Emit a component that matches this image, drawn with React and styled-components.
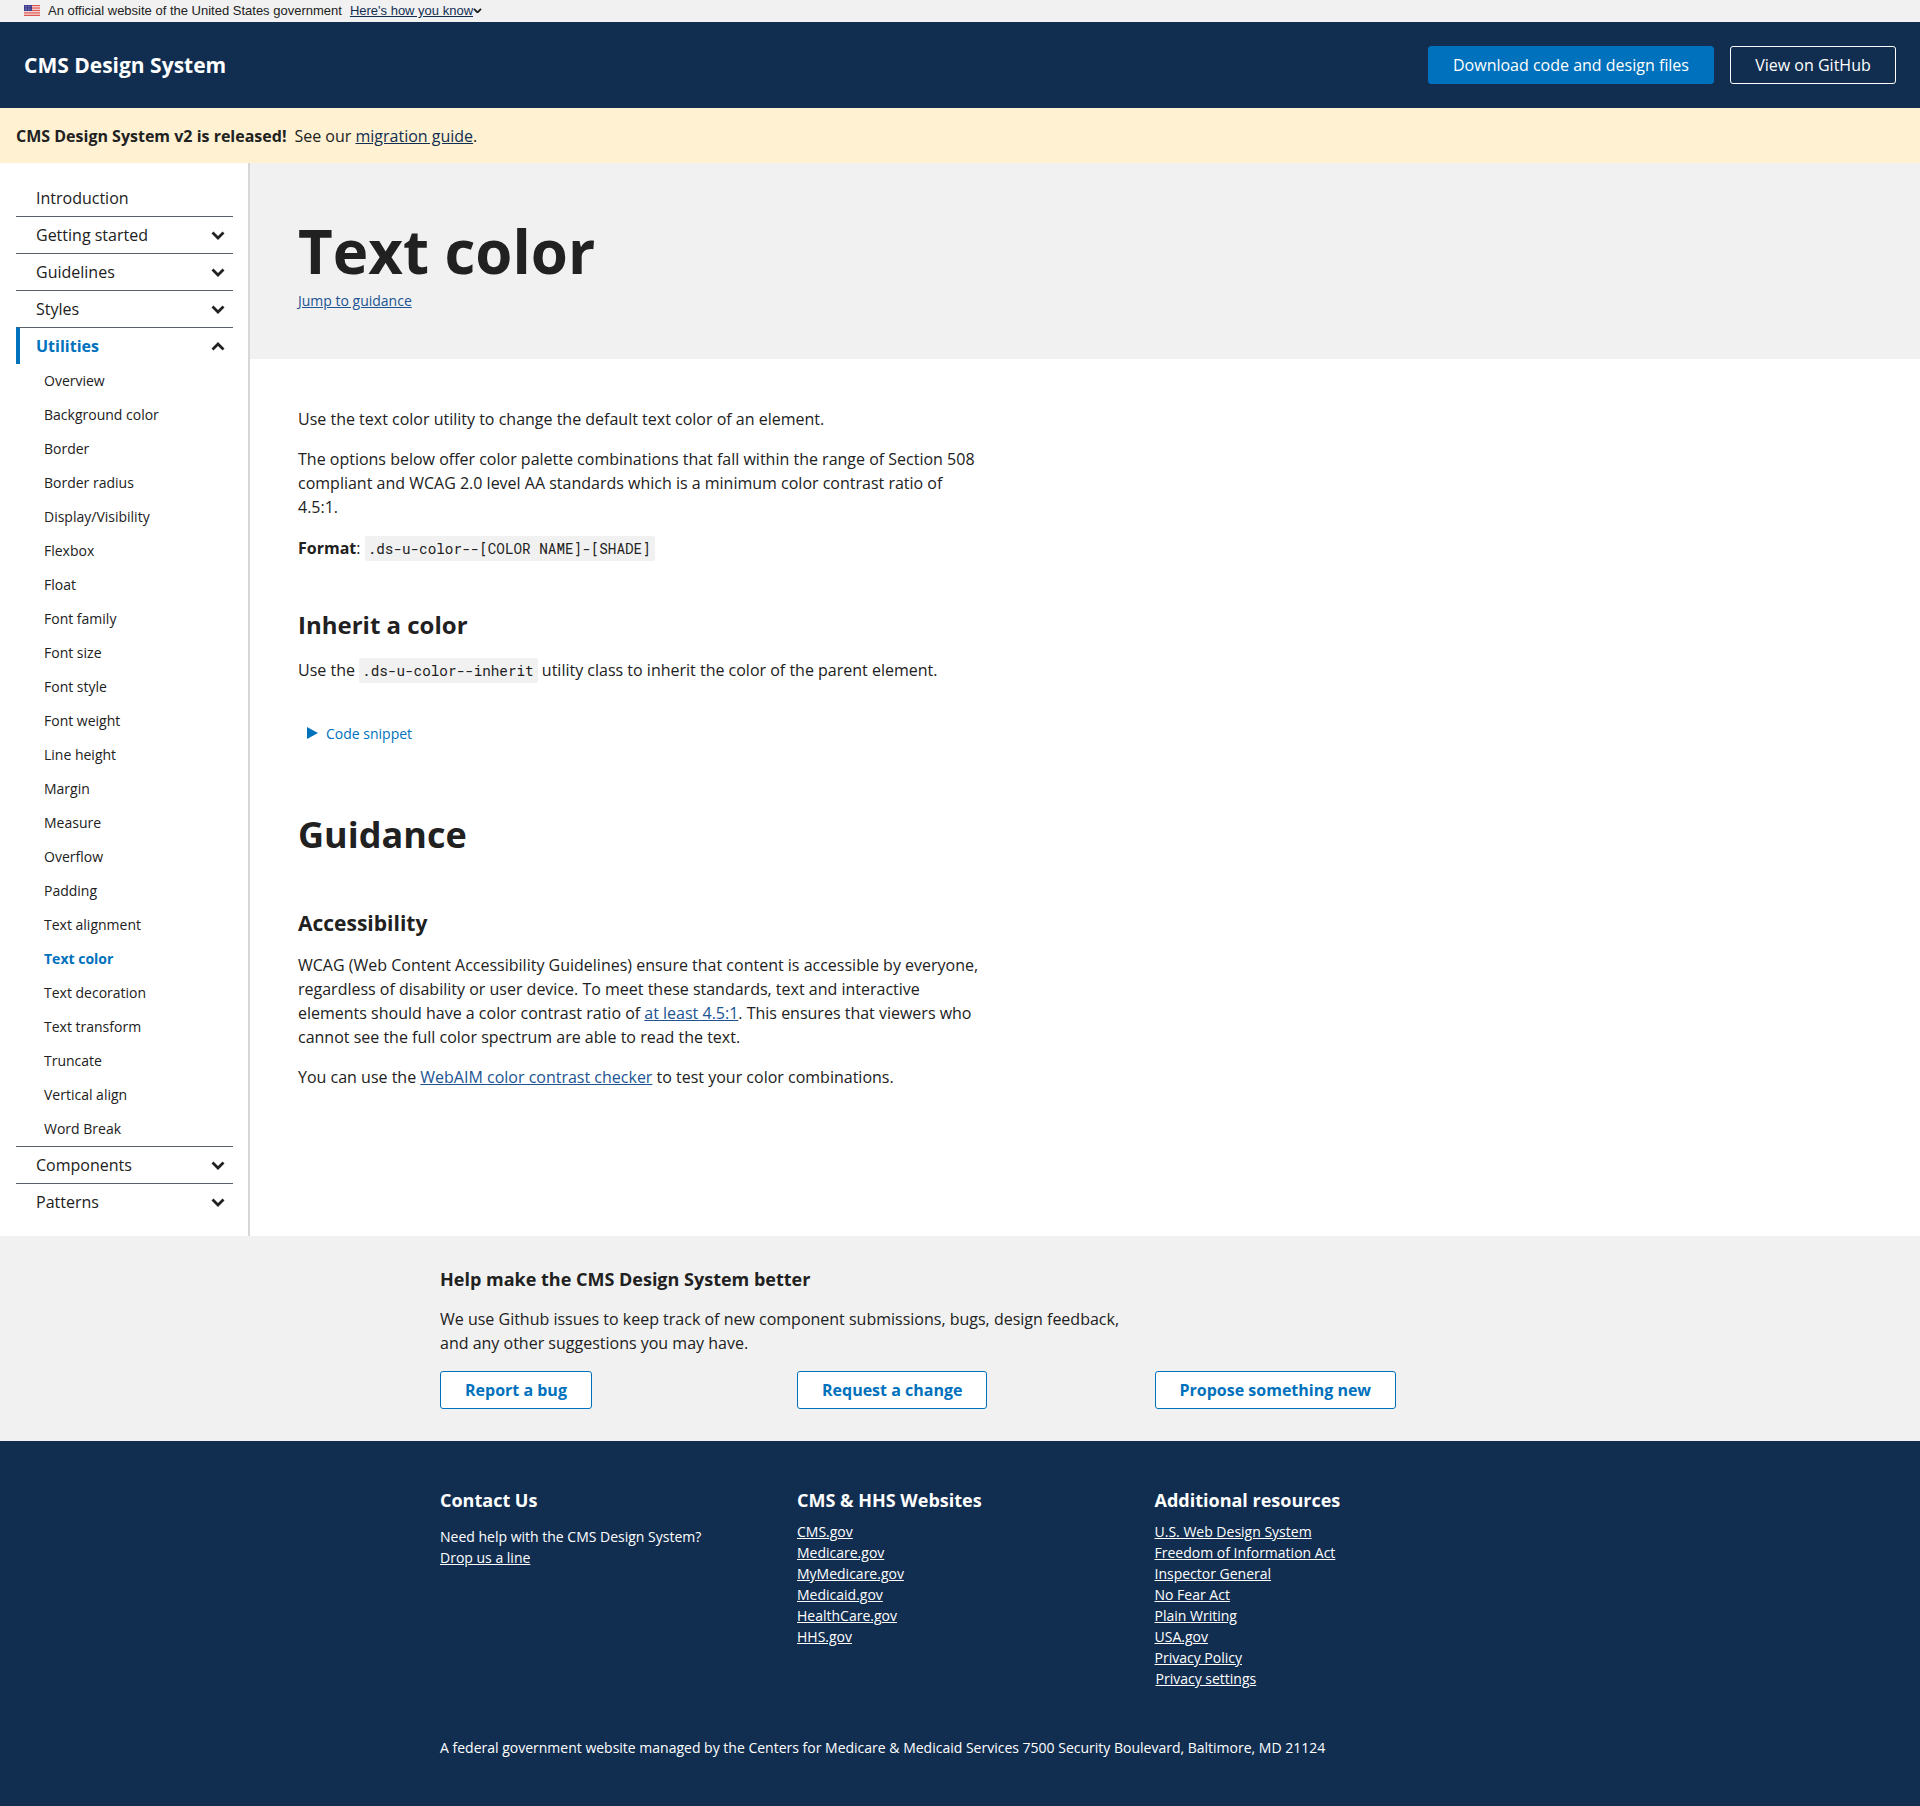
import React from 'react'
import styled, { createGlobalStyle } from 'styled-components'

const GlobalStyle = createGlobalStyle`
  body {
    margin: 0;
    font-family: "Open Sans", "Liberation Sans", sans-serif;
    color: #212121;
    background: #fff;
  }
  * { box-sizing: border-box; }
`

const GovBanner = styled.div`
  height: 22px;
  background: #f1f1f1;
  padding: 0 0 1px 24px;
  display: flex;
  align-items: center;
  font-family: "Liberation Sans", Arial, sans-serif;
  font-size: 13px;
  svg.flag { margin-right: 8px; }
  a {
    color: #112e51;
    margin-left: 8px;
    text-decoration: underline;
  }
`

const ChevronSvg = styled.svg`
  flex: none;
  transform: ${p => (p.$up ? 'rotate(180deg)' : 'none')};
`

const Chevron = ({ up, size = 14 }) => (
  <ChevronSvg $up={up} width={size} height={size * 9 / 14} viewBox="0 0 14 9">
    <path d="M1.5 1.5 L7 7 L12.5 1.5" fill="none" stroke="#212121" strokeWidth="2.8" />
  </ChevronSvg>
)

const Header = styled.header`
  height: 86px;
  background: #112e51;
  padding: 0 24px;
  display: flex;
  align-items: center;
  justify-content: space-between;
`

const Logo = styled.a`
  color: #fff;
  font-size: 21px;
  font-weight: 700;
`

const HeaderActions = styled.div`
  display: flex;
  gap: 16px;
`

const HeaderButton = styled.a`
  height: 38px;
  min-width: ${p => (p.$primary ? '286px' : '166px')};
  display: flex;
  align-items: center;
  justify-content: center;
  font-size: 16px;
  color: #fff;
  border-radius: 3px;
  background: ${p => (p.$primary ? '#0071bc' : 'transparent')};
  border: 1px solid ${p => (p.$primary ? '#0071bc' : '#fff')};
`

const Alert = styled.div`
  height: 55px;
  background: #fff1d2;
  padding-left: 16px;
  display: flex;
  align-items: center;
  gap: 8px;
  font-size: 16px;
  a { color: #112e51; text-decoration: underline; }
`

const Layout = styled.div`
  display: flex;
  height: 1073px;
`

const Sidebar = styled.nav`
  width: 250px;
  flex: none;
  border-right: 2px solid #d6d7d9;
  padding: 16px 15px 0 16px;
`

const NavRow = styled.div`
  height: 37px;
  display: flex;
  align-items: center;
  justify-content: space-between;
  padding: 0 8px 0 ${p => (p.$active ? '16px' : '20px')};
  font-size: 16px;
  border-top: ${p => (p.$first ? 'none' : '1px solid #5b616b')};
  border-left: ${p => (p.$active ? '4px solid #0071bc' : 'none')};
  color: ${p => (p.$active ? '#0071bc' : '#212121')};
  font-weight: ${p => (p.$active ? 700 : 400)};
`

const SubList = styled.ul`
  list-style: none;
  margin: 0;
  padding: 0 0 0 28px;
`

const SubItem = styled.li`
  height: 34px;
  padding-bottom: 2px;
  display: flex;
  align-items: center;
  font-size: 14px;
  color: ${p => (p.$active ? '#0071bc' : '#212121')};
  font-weight: ${p => (p.$active ? 700 : 400)};
`

const Main = styled.main`
  flex: 1;
`

const Hero = styled.div`
  height: 196px;
  background: #f1f1f1;
  padding: 49px 48px 0;
`

const Title = styled.h1`
  margin: 0;
  font-size: 60px;
  line-height: 78px;
  font-weight: 700;
`

const JumpLink = styled.a`
  display: block;
  margin-top: 1px;
  font-size: 14px;
  line-height: 20px;
  color: #205493;
  text-decoration: underline;
`

const Content = styled.div`
  padding: 48px 48px 0;
  width: 784px;
`

const Para = styled.p`
  margin: 0 0 16px;
  font-size: 16px;
  line-height: 24px;
  a { color: #205493; text-decoration: underline; }
`

const FormatPara = styled(Para)`
  margin-top: 17px;
`

const Code = styled.code`
  font-family: "Roboto Mono", "DejaVu Sans Mono", "Liberation Mono", monospace;
  font-size: 14.3px;
  background: #f1f1f1;
  padding: 3px 4px 3px 3px;
  border-radius: 2px;
`

const H3 = styled.h3`
  margin: 48px 0 17px;
  font-size: 24px;
  line-height: 32px;
  font-weight: 700;
`

const Snippet = styled.div`
  margin: 38px 0 0 9px;
  height: 24px;
  display: flex;
  align-items: center;
  gap: 8px;
  font-size: 14px;
  color: #0071bc;
`

const H2 = styled.h2`
  margin: 66px 0 0;
  font-size: 36px;
  line-height: 48px;
  font-weight: 700;
`

const H4 = styled.h4`
  margin: 50px 0 16px;
  font-size: 21px;
  line-height: 28px;
  font-weight: 700;
`

const FeedbackBand = styled.section`
  height: 205px;
  background: #f1f1f1;
  padding-top: 27px;
`

const Container = styled.div`
  width: 1005px;
  margin-left: 440px;
`

const FeedbackTitle = styled.div`
  font-size: 18px;
  font-weight: 700;
  line-height: 32px;
  margin-bottom: 12px;
`

const FeedbackText = styled.p`
  margin: 0 0 16px;
  width: 690px;
  font-size: 16px;
  line-height: 24px;
`

const Columns = styled.div`
  display: grid;
  grid-template-columns: 357px 357.5px 1fr;
`

const OutlineButton = styled.a`
  justify-self: start;
  height: 38px;
  padding: 0 24px;
  display: flex;
  align-items: center;
  font-size: 16px;
  font-weight: 700;
  color: #0071bc;
  background: #fff;
  border: 1px solid #0071bc;
  border-radius: 3px;
`

const Footer = styled.footer`
  height: 365px;
  background: #112e51;
  color: #fff;
  padding-top: 47px;
`

const FooterTitle = styled.div`
  font-size: 18px;
  font-weight: 700;
  line-height: 24px;
  margin-bottom: 9px;
`

const FooterLinks = styled.div`
  display: flex;
  flex-direction: column;
  align-items: flex-start;
  font-size: 14px;
  line-height: 21px;
  a { color: #fff; text-decoration: underline; }
`

const ContactLinks = styled(FooterLinks)`
  margin-top: 14px;
`

const SettingsLink = styled.a`
  margin-left: 1px;
`

const FooterNote = styled.div`
  margin-top: 49px;
  font-size: 14px;
  line-height: 20px;
`

const Flag = () => (
  <svg className="flag" width="16" height="11" viewBox="0 0 16 11">
    <rect width="16" height="11" fill="#fff" />
    {[0, 1.7, 3.4, 5.1, 6.8, 8.5, 10.1].map(y => <rect key={y} y={y} width="16" height="0.85" fill="#d83933" />)}
    <rect width="8" height="6" fill="#3c3b8f" />
    {[1.2, 2.8, 4.4, 6].map(x => [1.2, 3, 4.8].map(y => <circle key={`${x}-${y}`} cx={x} cy={y} r="0.35" fill="#fff" />))}
  </svg>
)

const groupsTop = ['Getting started', 'Guidelines', 'Styles']
const utilities = ['Overview', 'Background color', 'Border', 'Border radius', 'Display/Visibility', 'Flexbox', 'Float', 'Font family', 'Font size', 'Font style', 'Font weight', 'Line height', 'Margin', 'Measure', 'Overflow', 'Padding', 'Text alignment', 'Text color', 'Text decoration', 'Text transform', 'Truncate', 'Vertical align', 'Word Break']
const hhsLinks = ['CMS.gov', 'Medicare.gov', 'MyMedicare.gov', 'Medicaid.gov', 'HealthCare.gov', 'HHS.gov']
const resources = ['U.S. Web Design System', 'Freedom of Information Act', 'Inspector General', 'No Fear Act', 'Plain Writing', 'USA.gov', 'Privacy Policy']

export default function App() {
  return (
    <>
      <GlobalStyle />
      <GovBanner>
        <Flag />
        An official website of the United States government
        <a>Here's how you know</a>
        <Chevron size={9} />
      </GovBanner>
      <Header>
        <Logo>CMS Design System</Logo>
        <HeaderActions>
          <HeaderButton $primary>Download code and design files</HeaderButton>
          <HeaderButton>View on GitHub</HeaderButton>
        </HeaderActions>
      </Header>
      <Alert>
        <b>CMS Design System v2 is released!</b>
        <span>See our <a>migration guide</a>.</span>
      </Alert>
      <Layout>
        <Sidebar>
          <NavRow $first>Introduction</NavRow>
          {groupsTop.map(g => <NavRow key={g}>{g}<Chevron /></NavRow>)}
          <NavRow $active>Utilities<Chevron up /></NavRow>
          <SubList>
            {utilities.map(u => <SubItem key={u} $active={u === 'Text color'}>{u}</SubItem>)}
          </SubList>
          <NavRow>Components<Chevron /></NavRow>
          <NavRow>Patterns<Chevron /></NavRow>
        </Sidebar>
        <Main>
          <Hero>
            <Title>Text color</Title>
            <JumpLink>Jump to guidance</JumpLink>
          </Hero>
          <Content>
            <Para>Use the text color utility to change the default text color of an element.</Para>
            <Para>The options below offer color palette combinations that fall within the range of Section 508 compliant and WCAG 2.0 level AA standards which is a minimum color contrast ratio of 4.5:1.</Para>
            <FormatPara><b>Format</b>: <Code>.ds-u-color--[COLOR NAME]-[SHADE]</Code></FormatPara>
            <H3>Inherit a color</H3>
            <Para>Use the <Code>.ds-u-color--inherit</Code> utility class to inherit the color of the parent element.</Para>
            <Snippet>
              <svg width="11" height="12" viewBox="0 0 11 12"><path d="M0 0 L11 6 L0 12 Z" fill="#0071bc" /></svg>
              Code snippet
            </Snippet>
            <H2>Guidance</H2>
            <H4>Accessibility</H4>
            <Para>WCAG (Web Content Accessibility Guidelines) ensure that content is accessible by everyone, regardless of disability or user device. To meet these standards, text and interactive elements should have a color contrast ratio of <a>at least 4.5:1</a>. This ensures that viewers who cannot see the full color spectrum are able to read the text.</Para>
            <Para>You can use the <a>WebAIM color contrast checker</a> to test your color combinations.</Para>
          </Content>
        </Main>
      </Layout>
      <FeedbackBand>
        <Container>
          <FeedbackTitle>Help make the CMS Design System better</FeedbackTitle>
          <FeedbackText>We use Github issues to keep track of new component submissions, bugs, design feedback, and any other suggestions you may have.</FeedbackText>
          <Columns>
            <OutlineButton>Report a bug</OutlineButton>
            <OutlineButton>Request a change</OutlineButton>
            <OutlineButton>Propose something new</OutlineButton>
          </Columns>
        </Container>
      </FeedbackBand>
      <Footer>
        <Container>
          <Columns>
            <div>
              <FooterTitle>Contact Us</FooterTitle>
              <ContactLinks>
                <span>Need help with the CMS Design System?</span>
                <a>Drop us a line</a>
              </ContactLinks>
            </div>
            <div>
              <FooterTitle>CMS &amp; HHS Websites</FooterTitle>
              <FooterLinks>{hhsLinks.map(l => <a key={l}>{l}</a>)}</FooterLinks>
            </div>
            <div>
              <FooterTitle>Additional resources</FooterTitle>
              <FooterLinks>
                {resources.map(l => <a key={l}>{l}</a>)}
                <SettingsLink>Privacy settings</SettingsLink>
              </FooterLinks>
            </div>
          </Columns>
          <FooterNote>A federal government website managed by the Centers for Medicare &amp; Medicaid Services 7500 Security Boulevard, Baltimore, MD 21124</FooterNote>
        </Container>
      </Footer>
    </>
  )
}
